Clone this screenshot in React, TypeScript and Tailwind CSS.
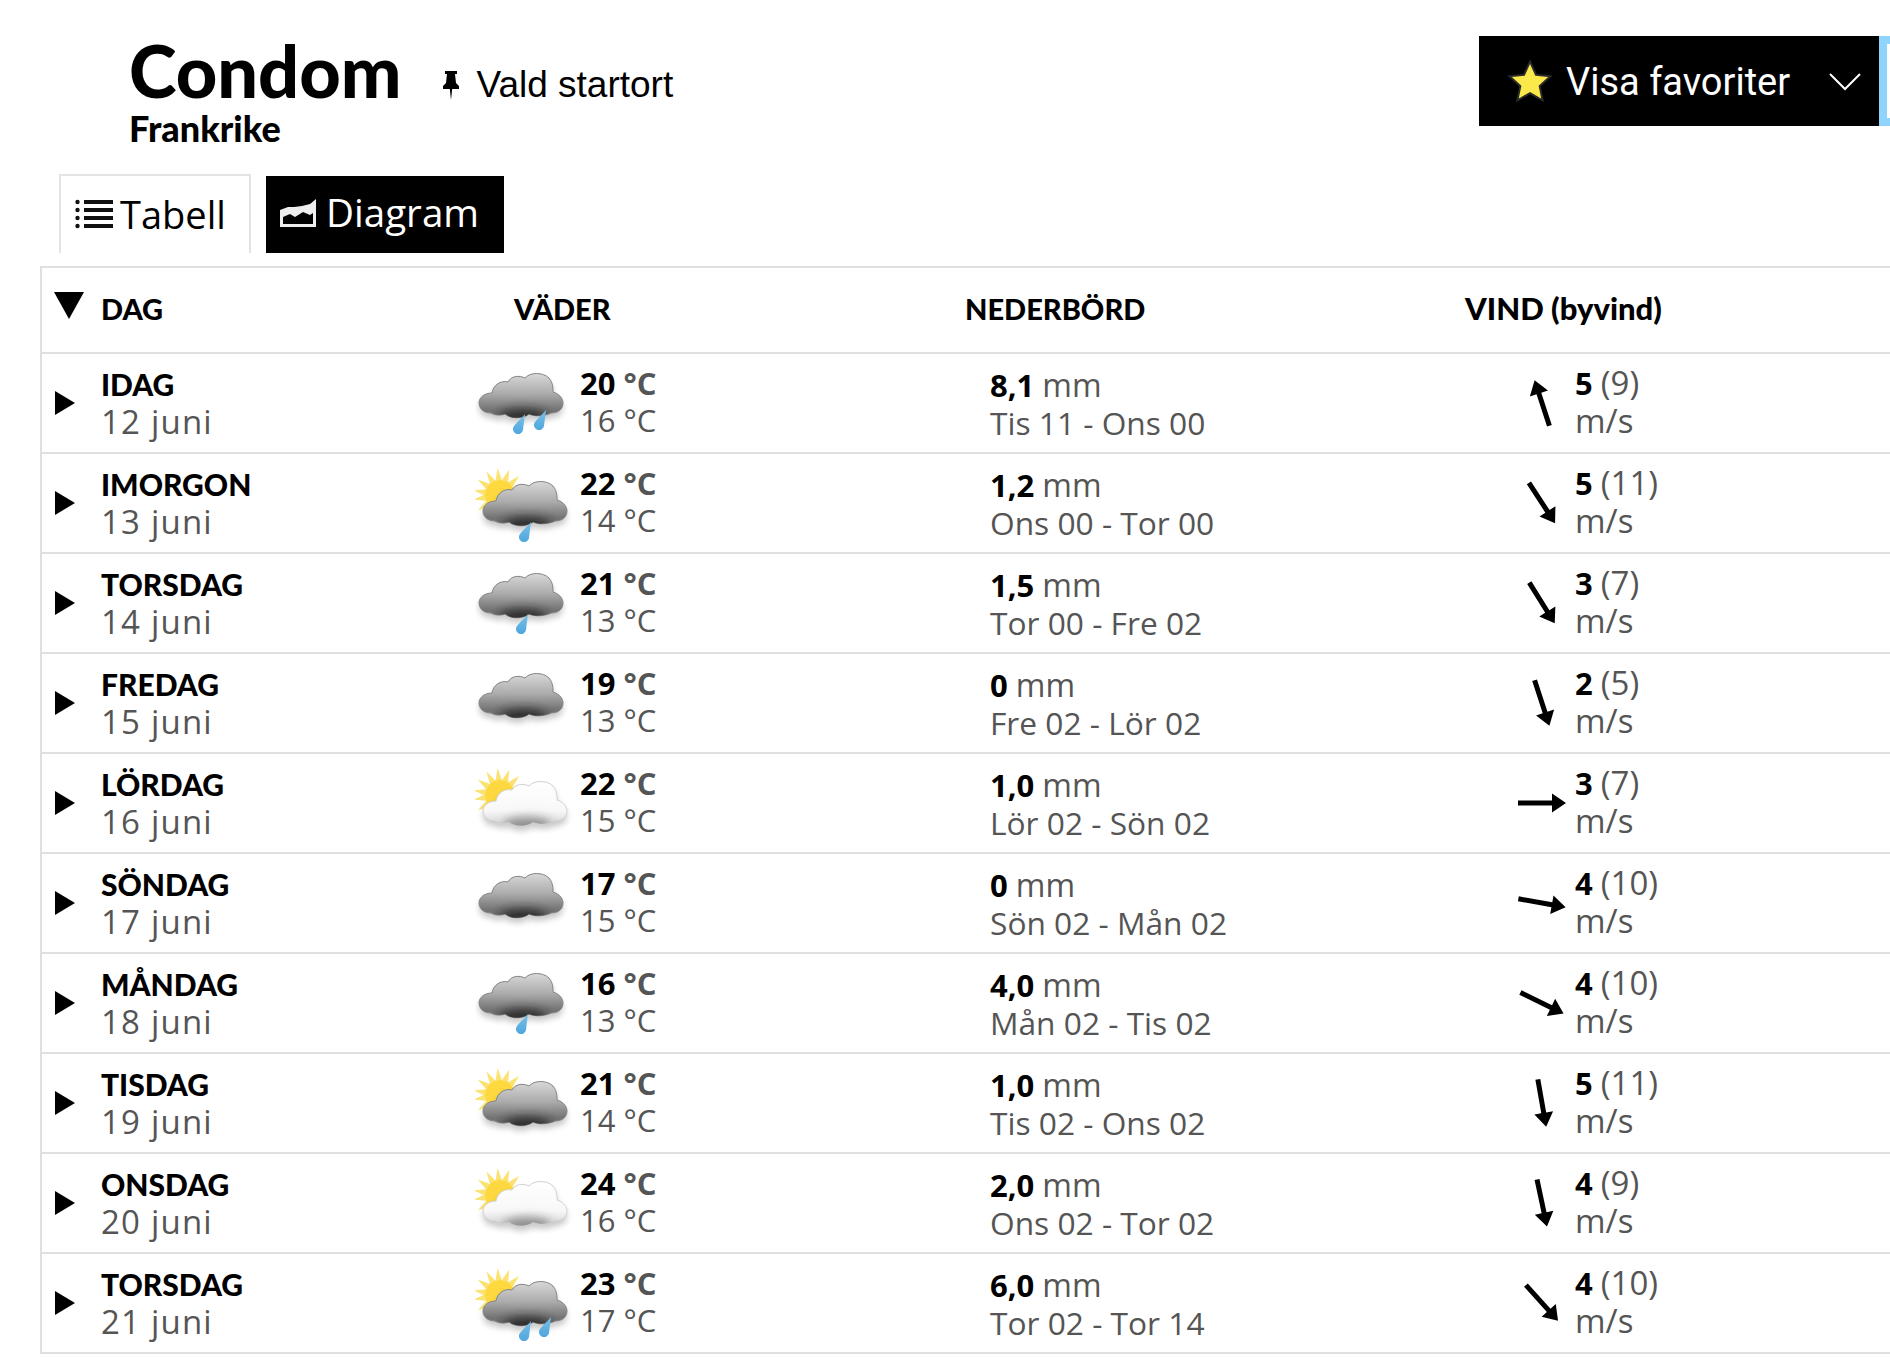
import React from "react";

const days = [
  { day: "IDAG", date: "12 juni", hi: 20, lo: 16, rain: "8,1", span: "Tis 11 - Ons 00", wind: 5, gust: 9, dir: -18, sun: false, white: false, drops: 2 },
  { day: "IMORGON", date: "13 juni", hi: 22, lo: 14, rain: "1,2", span: "Ons 00 - Tor 00", wind: 5, gust: 11, dir: 147, sun: true, white: false, drops: 1 },
  { day: "TORSDAG", date: "14 juni", hi: 21, lo: 13, rain: "1,5", span: "Tor 00 - Fre 02", wind: 3, gust: 7, dir: 148, sun: false, white: false, drops: 1 },
  { day: "FREDAG", date: "15 juni", hi: 19, lo: 13, rain: "0", span: "Fre 02 - Lör 02", wind: 2, gust: 5, dir: 162, sun: false, white: false, drops: 0 },
  { day: "LÖRDAG", date: "16 juni", hi: 22, lo: 15, rain: "1,0", span: "Lör 02 - Sön 02", wind: 3, gust: 7, dir: 90, sun: true, white: true, drops: 0 },
  { day: "SÖNDAG", date: "17 juni", hi: 17, lo: 15, rain: "0", span: "Sön 02 - Mån 02", wind: 4, gust: 10, dir: 100, sun: false, white: false, drops: 0 },
  { day: "MÅNDAG", date: "18 juni", hi: 16, lo: 13, rain: "4,0", span: "Mån 02 - Tis 02", wind: 4, gust: 10, dir: 116, sun: false, white: false, drops: 1 },
  { day: "TISDAG", date: "19 juni", hi: 21, lo: 14, rain: "1,0", span: "Tis 02 - Ons 02", wind: 5, gust: 11, dir: 170, sun: true, white: false, drops: 0 },
  { day: "ONSDAG", date: "20 juni", hi: 24, lo: 16, rain: "2,0", span: "Ons 02 - Tor 02", wind: 4, gust: 9, dir: 168, sun: true, white: true, drops: 0 },
  { day: "TORSDAG", date: "21 juni", hi: 23, lo: 17, rain: "6,0", span: "Tor 02 - Tor 14", wind: 4, gust: 10, dir: 138, sun: true, white: false, drops: 2 },
];

const CLOUD =
  "M16 59C8 59 4 54 4 49C4 43 10 39 17 39C18 31 26 26 33 28C36 22 44 21 50 24C55 18 68 18 74 24C79 30 78 38 78 38C85 40 88 45 88 49C88 56 82 59 76 59C70 62 60 63 54 60C48 65 36 65 30 60C25 62 19 61 16 59Z";
const DROP = "M7 -21C6 -14 5.5 -9 5 -5A5 5 0 1 1 -5 -7C-3.5 -11 2 -15 7 -21Z";

const rays = [-170, -145, -120, -95, -70, -45, -20, 170, 145].map((a) => {
  const r = (a * Math.PI) / 180;
  const pt = (len: number, off: number) =>
    `${25 + Math.cos(r + off) * len},${41 + Math.sin(r + off) * len}`;
  return `${pt(15, -0.22)} ${pt(27, 0)} ${pt(15, 0.22)}`;
});

const IconDefs = () => (
  <svg className="absolute w-0 h-0" aria-hidden="true">
    <defs>
      <linearGradient id="darkCloud" x1="0" y1="0" x2="0" y2="1">
        <stop offset="0" stopColor="#d8d8d8" />
        <stop offset="0.45" stopColor="#acacac" />
        <stop offset="0.8" stopColor="#767676" />
        <stop offset="1" stopColor="#6a6a6a" />
      </linearGradient>
      <linearGradient id="whiteCloud" x1="0" y1="0" x2="0" y2="1">
        <stop offset="0" stopColor="#ffffff" />
        <stop offset="0.65" stopColor="#f8f8f8" />
        <stop offset="1" stopColor="#d4d4d4" />
      </linearGradient>
      <linearGradient id="rainDrop" x1="0" y1="0" x2="0" y2="1">
        <stop offset="0" stopColor="#7cc0e6" />
        <stop offset="1" stopColor="#4ea6de" />
      </linearGradient>
      <clipPath id="cloudClip">
        <path d={CLOUD} />
      </clipPath>
      <filter id="soft" x="-20%" y="-20%" width="140%" height="160%">
        <feGaussianBlur stdDeviation="3" />
      </filter>
      <filter id="softer" x="-30%" y="-60%" width="160%" height="220%">
        <feGaussianBlur stdDeviation="5" />
      </filter>
    </defs>
  </svg>
);

const WeatherIcon = ({ sun, white, drops }: { sun: boolean; white: boolean; drops: number }) => {
  const shift = sun ? "translate(4 8)" : undefined;
  const dropSpots = sun
    ? drops === 2
      ? [[49, 93], [69, 89]]
      : [[49, 94]]
    : drops === 2
    ? [[43, 86], [64, 82]]
    : [[46, 86]];
  return (
    <svg width="105" height="99" viewBox="0 0 105 99" className="block">
      {sun && (
        <g>
          {rays.map((p) => (
            <polygon key={p} points={p} fill="#fbe273" />
          ))}
          <circle cx="25" cy="41" r="15" fill="#fdd93f" />
        </g>
      )}
      <g transform={shift}>
        <path d={CLOUD} transform="translate(0 5)" fill="#000" opacity="0.22" filter="url(#soft)" />
        <path
          d={CLOUD}
          fill={white ? "url(#whiteCloud)" : "url(#darkCloud)"}
          stroke={white ? "#d2d2d2" : "#858585"}
          strokeWidth="1"
        />
        <g clipPath="url(#cloudClip)">
          <ellipse
            cx="48"
            cy="63"
            rx="24"
            ry="8"
            fill={white ? "#777777" : "#222222"}
            opacity={white ? 0.75 : 0.85}
            filter="url(#softer)"
          />
        </g>
      </g>
      {drops > 0 &&
        dropSpots.map(([x, y]) => (
          <path key={x} d={DROP} transform={`translate(${x} ${y - 5})`} fill="url(#rainDrop)" />
        ))}
    </svg>
  );
};

const WindArrow = ({ dir }: { dir: number }) => (
  <svg width="50" height="50" viewBox="0 0 50 50" style={{ transform: `rotate(${dir}deg)` }}>
    <path d="M25 1L34.5 15H27.5V49H22.5V15H15.5Z" fill="#000" />
  </svg>
);

const PlayIcon = () => (
  <svg width="20" height="24" viewBox="0 0 20 24">
    <path d="M0 0L20 12L0 24Z" fill="#000" />
  </svg>
);

const head = "font-['Lato',sans-serif] font-black text-[#000]";

const App = () => {
  return (
    <div className="w-[1890px] h-[1358px] overflow-hidden bg-white font-['Open_Sans',sans-serif]">
      <IconDefs />
      <div className="flex justify-between h-[174px]">
        <div className="flex pl-[129px] pt-[36px]">
          <div>
            <h1 className={`${head} text-[72px] leading-[68px]`}>Condom</h1>
            <div className={`${head} text-[36px] leading-[40px] mt-[4px]`}>Frankrike</div>
          </div>
          <div className="flex items-center h-[32px] mt-[33px] ml-[41px]">
            <svg width="18" height="30" viewBox="0 0 18 30" className="mr-[16px]">
              <path d="M3 1H15V4H13L14 13L17 16V19H10.2L9 30L7.8 19H1V16L4 13L5 4H3Z" fill="#000" />
            </svg>
            <span className="font-['Liberation_Sans',sans-serif] text-[37px] leading-[40px] text-black">
              Vald startort
            </span>
          </div>
        </div>
        <div className="flex h-[90px] mt-[36px]">
          <div className="flex items-center w-[400px] h-full bg-black text-white pl-[27px]">
            <svg width="48" height="48" viewBox="0 0 48 48">
              <path
                d="M24 7L29.3 18.7L42.1 20.1L32.6 28.8L35.2 41.4L24 35L12.8 41.4L15.4 28.8L5.9 20.1L18.7 18.7Z"
                fill="#fbe84b"
                stroke="#2a2a2a"
                strokeWidth="4"
                strokeLinejoin="miter"
                paintOrder="stroke"
              />
            </svg>
            <span className="ml-[12px] mt-[1px] font-['Roboto',sans-serif] text-[38px] leading-none">Visa favoriter</span>
            <svg width="34" height="22" viewBox="0 0 34 22" className="ml-[38px]">
              <path d="M2 4L17 19L32 4" fill="none" stroke="#fff" strokeWidth="2" />
            </svg>
          </div>
          <div className="w-[11px] h-full bg-[#8fd4fd] pl-[8px] py-[8px]">
            <div className="w-full h-full bg-white" />
          </div>
        </div>
      </div>

      <div className="flex h-[79px] pl-[59px] gap-[15px]">
        <div className="flex items-center w-[192px] h-full border-2 border-b-0 border-[#e4e4e4] pl-[14px] pb-[1px] text-[38px] text-black">
          <svg width="38" height="30" viewBox="0 0 38 30" className="mr-[7px]">
            <circle cx="2.5" cy="3" r="2.2" fill="#111" />
            <circle cx="2.5" cy="11" r="2.2" fill="#111" />
            <circle cx="2.5" cy="19" r="2.2" fill="#111" />
            <circle cx="2.5" cy="27" r="2.2" fill="#111" />
            <path d="M9 1H38V5H9ZM9 9H38V13H9ZM9 17H38V21H9ZM9 25H38V29H9Z" fill="#111" />
          </svg>
          Tabell
        </div>
        <div className="flex items-center w-[238px] h-[77px] mt-[2px] bg-black pl-[14px] pb-[3px] text-[38.6px] text-white">
          <svg width="36" height="28" viewBox="0 0 36 28" className="mr-[10px]">
            <path d="M0 11L8 8L14 8L22 7L30 5L36 0V28H0Z" fill="#eeeeee" />
            <path d="M3 25V18L10 15L15 18L23 13L30 16L33 14V25Z" fill="#000" />
          </svg>
          Diagram
        </div>
      </div>

      <div className="ml-[40px] mt-[13px] border-l-2 border-t-2 border-[#e0e0e0]">
        <div className={`relative flex items-center h-[86px] pl-[59px] pb-[3px] border-b-2 border-[#e0e0e0] ${head} text-[29px]`}>
          <svg width="30" height="27" viewBox="0 0 30 27" className="absolute left-[12px] top-[24px]">
            <path d="M0 0H30L15 27Z" fill="#000" />
          </svg>
          <span className="w-[413px]">DAG</span>
          <span className="w-[451px]">VÄDER</span>
          <span className="w-[500px]">NEDERBÖRD</span>
          <span className="text-[31px]">VIND (byvind)</span>
        </div>
        {days.map((d) => (
          <div key={d.date} className="flex items-center h-[100px] border-b-2 border-[#e0e0e0] text-[#555] text-[31px] leading-[37px]">
            <div className="w-[59px] pl-[13px]">
              <PlayIcon />
            </div>
            <div className="w-[374px]">
              <div className={`${head} text-[30px]`}>{d.day}</div>
              <div className="text-[33px] tracking-[1.2px]">{d.date}</div>
            </div>
            <div className="w-[105px]">
              <WeatherIcon sun={d.sun} white={d.white} drops={d.drops} />
            </div>
            <div className="w-[410px] mt-[-3px]">
              <div>
                <b className="text-black">{d.hi}</b> <b className="font-bold">°C</b>
              </div>
              <div>{d.lo} °C</div>
            </div>
            <div className="w-[520px] mt-[1px]">
              <div>
                <b className="text-black">{d.rain}</b> <span className="text-[32px]">mm</span>
              </div>
              <div className="text-[31.7px]">{d.span}</div>
            </div>
            <div className="flex justify-center w-[65px] pr-[2px]">
              <WindArrow dir={d.dir} />
            </div>
            <div className="mt-[-3px]">
              <div>
                <b className="text-black">{d.wind}</b> <span className="text-[33px]">({d.gust})</span>
              </div>
              <div className="text-[33px]">m/s</div>
            </div>
          </div>
        ))}
      </div>
    </div>
  );
};

export default App;
